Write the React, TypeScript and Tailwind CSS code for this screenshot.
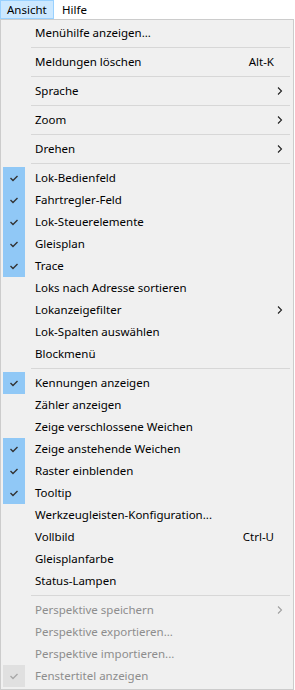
type Item =
  | { sep: true }
  | {
      sep?: false;
      label: string;
      checked?: boolean;
      shortcut?: string;
      submenu?: boolean;
      disabled?: boolean;
    };

const items: Item[] = [
  { label: "Menühilfe anzeigen..." },
  { sep: true },
  { label: "Meldungen löschen", shortcut: "Alt-K" },
  { sep: true },
  { label: "Sprache", submenu: true },
  { sep: true },
  { label: "Zoom", submenu: true },
  { sep: true },
  { label: "Drehen", submenu: true },
  { sep: true },
  { label: "Lok-Bedienfeld", checked: true },
  { label: "Fahrtregler-Feld", checked: true },
  { label: "Lok-Steuerelemente", checked: true },
  { label: "Gleisplan", checked: true },
  { label: "Trace", checked: true },
  { label: "Loks nach Adresse sortieren" },
  { label: "Lokanzeigefilter", submenu: true },
  { label: "Lok-Spalten auswählen" },
  { label: "Blockmenü" },
  { sep: true },
  { label: "Kennungen anzeigen", checked: true },
  { label: "Zähler anzeigen" },
  { label: "Zeige verschlossene Weichen" },
  { label: "Zeige anstehende Weichen", checked: true },
  { label: "Raster einblenden", checked: true },
  { label: "Tooltip", checked: true },
  { label: "Werkzeugleisten-Konfiguration..." },
  { label: "Vollbild", shortcut: "Ctrl-U" },
  { label: "Gleisplanfarbe" },
  { label: "Status-Lampen" },
  { sep: true },
  { label: "Perspektive speichern", submenu: true, disabled: true },
  { label: "Perspektive exportieren...", disabled: true },
  { label: "Perspektive importieren...", disabled: true },
  { label: "Fenstertitel anzeigen", checked: true, disabled: true },
];

const Check = ({ disabled }: { disabled?: boolean }) => (
  <svg width="22" height="22" viewBox="0 0 22 22">
    <polyline
      points="7.5,11 10,13.5 14.5,9"
      fill="none"
      stroke={disabled ? "#a8a8a8" : "#333"}
      strokeWidth="1.4"
    />
  </svg>
);

const Chevron = ({ disabled }: { disabled?: boolean }) => (
  <svg width="6" height="8" viewBox="0 0 6 8">
    <polyline
      points="1,0.5 4.5,4 1,7.5"
      fill="none"
      stroke={disabled ? "#a0a0a0" : "#222"}
      strokeWidth="1.1"
    />
  </svg>
);

export default function App() {
  return (
    <div className="w-[295px] h-[690px] bg-white font-['Noto_Sans',sans-serif] text-[11.5px] leading-none text-black">
      {/* Menu bar */}
      <div className="flex h-[19px] items-stretch">
        <div className="w-[54px] border border-[#99d1ff] bg-[#cce8ff] pl-[6px] flex items-center">
          Ansicht
        </div>
        <div className="pl-[8px] flex items-center">Hilfe</div>
      </div>

      {/* Dropdown */}
      <div className="w-[294px] h-[671px] border border-[#cccccc] bg-[#f0f0f0] p-[2px]">
        {items.map((it, i) =>
          it.sep ? (
            <div key={i} className="h-[7px] flex items-center pl-[28px] pr-[1px]">
              <div className="h-px w-full bg-[#d7d7d7]" />
            </div>
          ) : (
            <div
              key={i}
              className={`flex h-[22px] items-center ${it.disabled ? "text-[#8d8d8d]" : "text-black"}`}
            >
              <div
                className={`w-[22px] h-[22px] shrink-0 ${
                  it.checked ? (it.disabled ? "bg-[#e0e0e0]" : "bg-[#90c8f6]") : ""
                }`}
              >
                {it.checked && <Check disabled={it.disabled} />}
              </div>
              <div className="ml-[10px] flex-1 whitespace-nowrap">{it.label}</div>
              {it.shortcut && <div className="pr-[17px]">{it.shortcut}</div>}
              {it.submenu && (
                <div className="pr-[8px] flex items-center">
                  <Chevron disabled={it.disabled} />
                </div>
              )}
            </div>
          )
        )}
      </div>
    </div>
  );
}
